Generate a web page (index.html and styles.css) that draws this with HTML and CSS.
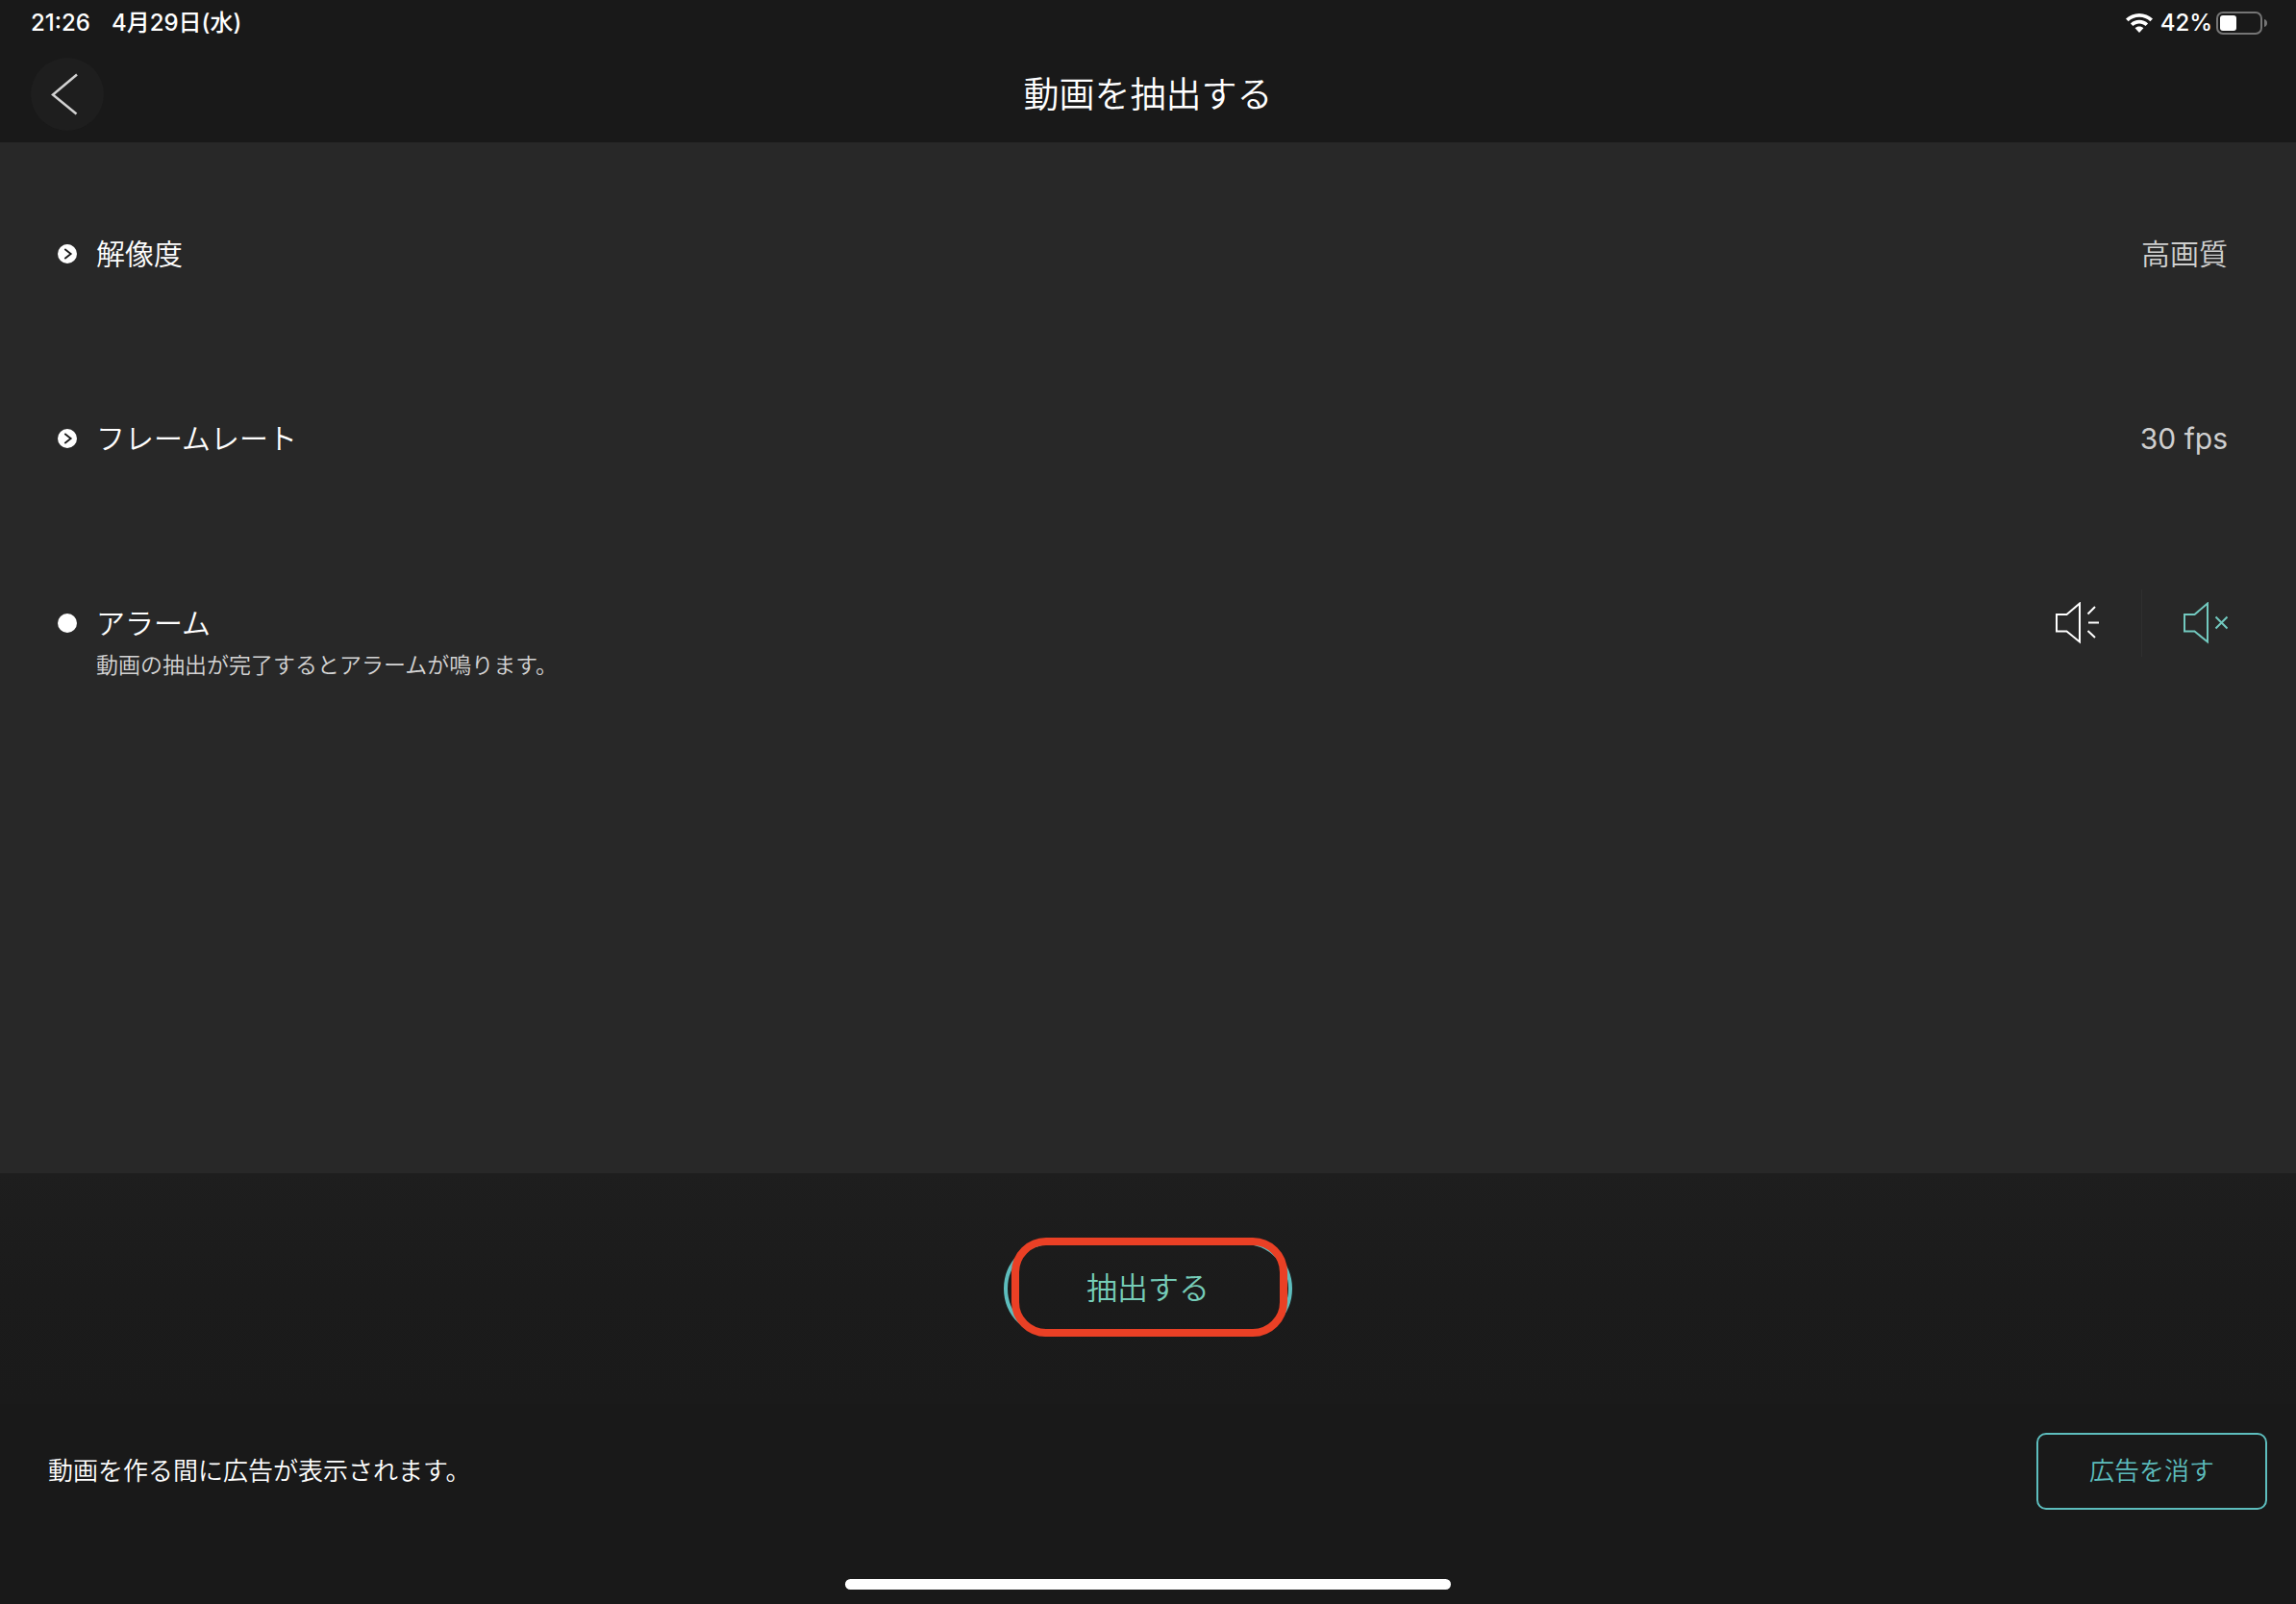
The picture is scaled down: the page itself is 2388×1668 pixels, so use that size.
FILE: index.html
```
<!DOCTYPE html>
<html lang="ja">
<head>
<meta charset="utf-8">
<meta name="viewport" content="width=device-width, initial-scale=1">
<title>動画を抽出する</title>
<link rel="stylesheet" href="styles.css">
</head>
<body>
<div class="status">
  <div class="status-side status-clock"><span>21:26</span><span>4月29日(水)</span></div>
  <div class="status-side">
    <svg class="wifi" viewBox="0 0 28 20" aria-hidden="true">
      <path d="M14 0C19.400 0 24.300 2.100 28 5.600L25.400 8.200C22.400 5.400 18.400 3.700 14 3.700S5.600 5.400 2.600 8.200L0 5.600C3.700 2.100 8.600 0 14 0Z"/>
      <path d="M14 6.800C17.500 6.800 20.700 8.200 23.100 10.400L20.500 13C18.800 11.400 16.500 10.500 14 10.500S9.200 11.400 7.500 13L4.900 10.400C7.300 8.200 10.500 6.800 14 6.800Z"/>
      <path d="M14 13.600C15.700 13.600 17.200 14.200 18.400 15.300L14 20L9.600 15.300C10.800 14.200 12.300 13.600 14 13.600Z"/>
    </svg>
    <span class="percent">42%</span>
    <svg class="battery" viewBox="0 0 54 24" aria-hidden="true">
      <rect class="battery-case" x="1" y="1" width="46" height="22" rx="6"/>
      <rect x="4" y="4" width="17" height="16" rx="3"/>
      <path class="battery-cap" d="M50 8c2 .600 3 2 3 4s-1 3.400-3 4z"/>
    </svg>
  </div>
</div>
<header class="header">
  <button class="back" type="button" aria-label="戻る">
    <svg viewBox="0 0 76 76" aria-hidden="true"><path d="M48 17.500L23 38.500L47.500 58.500"/></svg>
  </button>
  <h1 class="title">動画を抽出する</h1>
</header>
<main class="settings">
  <button class="row" type="button">
    <svg class="bullet" viewBox="0 0 20 20" aria-hidden="true"><circle cx="10" cy="10" r="10"/><path d="M7.300 5L13.700 10L7.300 15"/></svg>
    <span class="label">解像度</span>
    <span class="value">高画質</span>
  </button>
  <button class="row" type="button">
    <svg class="bullet" viewBox="0 0 20 20" aria-hidden="true"><circle cx="10" cy="10" r="10"/><path d="M7.300 5L13.700 10L7.300 15"/></svg>
    <span class="label">フレームレート</span>
    <span class="value value-latin">30 fps</span>
  </button>
  <div class="row" role="radiogroup" aria-labelledby="alarm-label">
    <svg class="bullet" viewBox="0 0 20 20" aria-hidden="true"><circle cx="10" cy="10" r="10"/></svg>
    <span class="label" id="alarm-label">アラーム<small class="note">動画の抽出が完了するとアラームが鳴ります。</small></span>
    <span class="sound-group">
      <label class="sound">
        <input type="radio" name="alarm" value="on" aria-label="オン">
        <svg viewBox="0 0 46 44" aria-hidden="true"><path d="M1 13H11.500L25 1.500V41.500L11.500 30.500H1ZM33.500 12.500L41 5M34 21.500H45M33.500 30L41 37"/></svg>
      </label>
      <label class="sound">
        <input type="radio" name="alarm" value="off" aria-label="オフ" checked>
        <svg viewBox="0 0 46 44" aria-hidden="true"><path d="M1 13H11.500L25 1.500V41.500L11.500 30.500H1ZM33.500 15.500L45.500 27.500M45.500 15.500L33.500 27.500"/></svg>
      </label>
    </span>
  </div>
</main>
<section class="action">
  <div class="extract-wrap">
    <button class="extract" type="button">抽出する</button>
    <span class="marker"></span>
  </div>
</section>
<footer class="footer">
  <p class="ad-note">動画を作る間に広告が表示されます。</p>
  <button class="remove-ads" type="button">広告を消す</button>
</footer>
<div class="home"><span class="home-bar"></span></div>
</body>
</html>
```
FILE: styles.css
```
* { box-sizing: border-box; }

body {
  display: flex;
  flex-direction: column;
  min-height: 100vh;
  margin: 0;
  background: #191919;
  color: #fff;
  font-family: Inter, "Noto Sans CJK JP", sans-serif;
  font-weight: 350;
}

button {
  padding: 0;
  border: 0;
  background: none;
  color: inherit;
  font: inherit;
  cursor: pointer;
}

svg { display: block; flex: none; }

/* Status bar */
.status {
  display: flex;
  justify-content: space-between;
  height: 48px;
  padding: 0 29px 0 32px;
  font-size: 24px;
  font-weight: 500;
  line-height: 48px;
}
.status-side { display: flex; align-items: center; }
.status-clock { gap: 22px; }
.wifi { width: 28px; height: 20px; margin-right: 8px; fill: #fff; }
.percent { margin-right: 4px; }
.battery { width: 54px; height: 24px; fill: #fff; }
.battery .battery-case { fill: none; stroke: #757575; stroke-width: 2; }
.battery .battery-cap { fill: #757575; }

/* Title bar */
.header {
  display: grid;
  grid-template-columns: 76px 1fr 76px;
  align-items: center;
  height: 100px;
  padding: 0 32px;
}
.back {
  width: 76px;
  height: 76px;
  border-radius: 50%;
  background: #1e1e1e;
}
.back path { fill: none; stroke: #d2d2d2; stroke-width: 2.500; }
.title {
  margin: 0;
  padding-top: 2px;
  font-size: 37px;
  font-weight: 350;
  line-height: 56px;
  text-align: center;
}

/* Settings list */
.settings {
  flex: 1;
  padding: 20px 71px 0 60px;
  background: #282828;
}
.row {
  display: flex;
  align-items: center;
  gap: 20px;
  width: 100%;
  height: 192px;
  font-size: 30px;
  line-height: 44px;
  text-align: left;
}
.bullet { width: 20px; height: 20px; fill: #fff; }
.bullet path { fill: none; stroke: #1a1a1a; stroke-width: 1.800; }
.label { position: relative; flex: 1; }
.note {
  position: absolute;
  top: 100%;
  left: 0;
  color: #d4d4d4;
  font-size: 23px;
  white-space: nowrap;
}
.value { color: #cfcfcf; }
.value-latin { font-weight: 400; }

.sound-group { display: flex; }
.sound { display: flex; align-items: center; height: 70px; cursor: pointer; }
.sound:first-child { padding-right: 43px; }
.sound:last-child { padding-left: 43px; border-left: 1px solid #303030; }
.sound input { position: absolute; opacity: 0; margin: 0; }
.sound svg { width: 46px; height: 44px; fill: none; stroke: #fff; stroke-width: 2; }
.sound input:checked + svg { stroke: #72c9bf; }

/* Extract button */
.action {
  display: flex;
  align-items: center;
  justify-content: center;
  height: 240px;
  background: linear-gradient(#1e1e1e, #1b1b1b 50%, #1a1a1a);
}
.extract-wrap { position: relative; }
.extract {
  display: block;
  width: 300px;
  height: 100px;
  border: 4px solid #5dbdbd;
  border-radius: 50px;
  color: #76cdb8;
  font-size: 32px;
  line-height: 44px;
}
.marker {
  position: absolute;
  inset: -3px 5px 0 8px;
  border: 8px solid #ea4025;
  border-radius: 36px;
  pointer-events: none;
}

/* Ad notice */
.footer {
  display: flex;
  align-items: center;
  justify-content: space-between;
  height: 140px;
  padding: 0 30px 0 50px;
  font-size: 26px;
  line-height: 36px;
}
.ad-note { margin: 0; }
.remove-ads {
  width: 240px;
  height: 80px;
  border: 2px solid #5dbdbd;
  border-radius: 10px;
  color: #5dbdbd;
}

.home { display: flex; justify-content: center; height: 68px; padding-top: 42px; }
.home-bar { width: 630px; height: 11px; border-radius: 6px; background: #fff; }
```
